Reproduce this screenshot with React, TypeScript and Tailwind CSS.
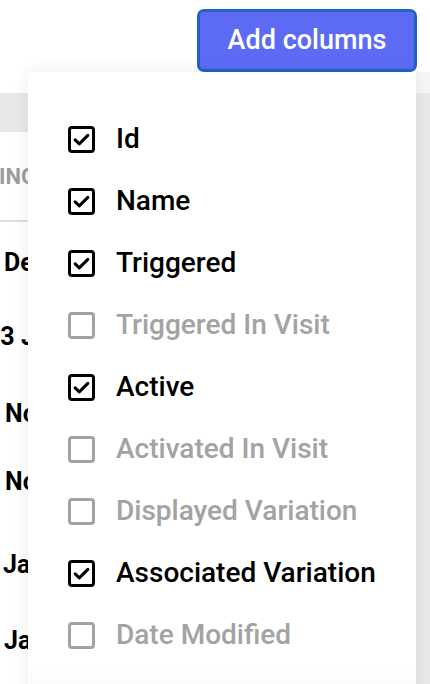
import { useState } from "react";

interface ColumnOption {
  key: string;
  label: string;
  checked: boolean;
}

const initialColumns: ColumnOption[] = [
  { key: "id", label: "Id", checked: true },
  { key: "name", label: "Name", checked: true },
  { key: "triggered", label: "Triggered", checked: true },
  { key: "triggeredInVisit", label: "Triggered In Visit", checked: false },
  { key: "active", label: "Active", checked: true },
  { key: "activatedInVisit", label: "Activated In Visit", checked: false },
  { key: "displayedVariation", label: "Displayed Variation", checked: false },
  { key: "associatedVariation", label: "Associated Variation", checked: true },
  { key: "dateModified", label: "Date Modified", checked: false },
];

const rows = [
  { text: "Dec", cls: "h-[82px] pl-[4px]" },
  { text: "13 Jan", cls: "h-[66px] -ml-[14px]" },
  { text: "Nov", cls: "h-[88px] pl-[5px]" },
  { text: "Nov", cls: "h-[48px] pl-[5px]" },
  { text: "Jan", cls: "h-[118px] pl-[3px]" },
  { text: "Jan", cls: "h-[34px] pl-[4px]" },
];

const Checkbox = ({ checked }: { checked: boolean }) => (
  <span
    className={`flex h-[27px] w-[27px] shrink-0 items-center justify-center rounded-[4px] border-[3px] ${
      checked ? "border-black" : "border-[#a3a3a3]"
    }`}
  >
    {checked && (
      <svg width="19" height="19" viewBox="0 0 24 24" fill="none">
        <path
          d="M4 12.5l5.2 5L20 6.8"
          stroke="#000"
          strokeWidth="3.8"
          strokeLinecap="round"
          strokeLinejoin="round"
        />
      </svg>
    )}
  </span>
);

const App = () => {
  const [columns, setColumns] = useState(initialColumns);

  const toggle = (key: string) =>
    setColumns((cols) =>
      cols.map((c) => (c.key === key ? { ...c, checked: !c.checked } : c))
    );

  return (
    <div
      className="relative h-[684px] w-[430px] overflow-hidden bg-white"
      style={{ fontFamily: "Roboto, 'Liberation Sans', sans-serif" }}
    >
      {/* Toolbar */}
      <div className="flex h-[93px] justify-end pr-[13px] pt-[9px]">
        <button className="h-[63px] w-[220px] rounded-[7px] border-[3px] border-[#1f63c4] bg-[#5d6af4] text-[27px] font-medium text-white">
          Add columns
        </button>
      </div>

      {/* Table behind */}
      <div className="h-[39px] bg-[#e8e8e8]" />
      <div className="flex h-[90px] items-center whitespace-nowrap border-b-2 border-[#dedede] -ml-[50px] text-[22px] font-bold uppercase text-[#9d9d9d]">
        Pricing
      </div>
      <div className="flex flex-col text-[25px] font-bold text-black">
        {rows.map((r, i) => (
          <div key={i} className={`flex items-center whitespace-nowrap ${r.cls}`}>
            {r.text}
          </div>
        ))}
      </div>

      {/* Right strip */}
      <div className="absolute right-0 top-[72px] h-[21px] w-[14px] bg-[#f6f6f6]" />
      <div className="absolute bottom-0 right-0 top-[93px] w-[14px] bg-[#e9e9e9]" />

      {/* Dropdown panel */}
      <div className="absolute left-[28px] top-[72px] h-[640px] w-[388px] bg-white shadow-[0_0_16px_rgba(0,0,0,0.08)]">
        <ul className="flex flex-col pl-[40px] pt-[36px]">
          {columns.map((c) => (
            <li
              key={c.key}
              onClick={() => toggle(c.key)}
              className="flex h-[62px] cursor-pointer items-center gap-[21px]"
            >
              <Checkbox checked={c.checked} />
              <span
                className={`text-[28px] font-medium leading-none ${
                  c.checked ? "text-black" : "text-[#a3a3a3]"
                }`}
              >
                {c.label}
              </span>
            </li>
          ))}
        </ul>
        <div className="absolute left-0 right-0 top-[591px] h-[50px] bg-gradient-to-b from-white to-[#f7f7f7]" />
      </div>
    </div>
  );
};

export default App;
